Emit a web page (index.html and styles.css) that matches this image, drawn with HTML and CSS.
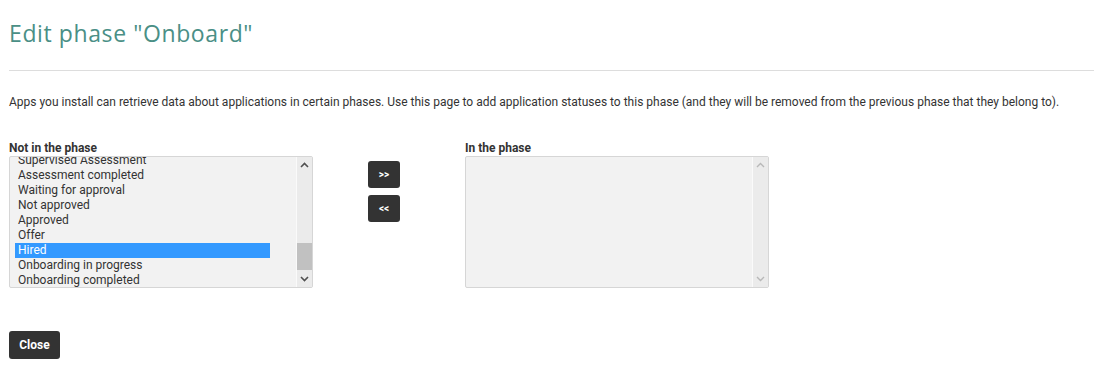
FILE: index.html
```html
<!DOCTYPE html>
<html lang="en">
<head>
    <meta charset="UTF-8">
    <meta name="viewport" content="width=device-width, initial-scale=1.0">
    <title>Edit phase</title>
    <link rel="stylesheet" href="styles.css">
</head>
<body>

<div class="page">
    <h1 class="title">Edit phase "Onboard"</h1>
    <hr class="divider">

    <p class="intro">Apps you install can retrieve data about applications in certain phases. Use this page to add application statuses to this phase (and they will be removed from the previous phase that they belong to).</p>

    <div class="lists">
        <div class="list-col">
            <div class="list-label">Not in the phase</div>
            <div class="listbox">
                <div class="options scrolled">
                    <div class="option">Supervised Assessment</div>
                    <div class="option">Assessment completed</div>
                    <div class="option">Waiting for approval</div>
                    <div class="option">Not approved</div>
                    <div class="option">Approved</div>
                    <div class="option">Offer</div>
                    <div class="option selected">Hired</div>
                    <div class="option">Onboarding in progress</div>
                    <div class="option">Onboarding completed</div>
                </div>
                <div class="scrollbar">
                    <svg class="arrow" width="15" height="17" viewBox="0 0 15 17"><polyline points="4,10 7.5,6.5 11,10" fill="none" stroke="#505050" stroke-width="1.6"/></svg>
                    <div class="track"><div class="thumb"></div></div>
                    <svg class="arrow" width="15" height="17" viewBox="0 0 15 17"><polyline points="4,7 7.5,10.5 11,7" fill="none" stroke="#505050" stroke-width="1.6"/></svg>
                </div>
            </div>
        </div>

        <div class="move-buttons">
            <button class="btn small">&gt;&gt;</button>
            <button class="btn small">&lt;&lt;</button>
        </div>

        <div class="list-col">
            <div class="list-label">In the phase</div>
            <div class="listbox">
                <div class="options"></div>
                <div class="scrollbar disabled">
                    <svg class="arrow" width="15" height="17" viewBox="0 0 15 17"><polyline points="4,10 7.5,6.5 11,10" fill="none" stroke="#b8b8b8" stroke-width="1.4"/></svg>
                    <div class="track"></div>
                    <svg class="arrow" width="15" height="17" viewBox="0 0 15 17"><polyline points="4,7 7.5,10.5 11,7" fill="none" stroke="#b8b8b8" stroke-width="1.4"/></svg>
                </div>
            </div>
        </div>
    </div>

    <button class="btn close">Close</button>
</div>

</body>
</html>
```

FILE: styles.css
```css
body {
    font-family: Roboto, "Liberation Sans", sans-serif;
    font-size: 12px;
    color: #333;
    background-color: white;
    margin: 0;
}
.page {
    padding: 0 0 0 9px;
}
.title {
    font-family: "Open Sans", sans-serif;
    font-weight: 400;
    font-size: 23px;
    letter-spacing: 0.6px;
    color: #4a8f86;
    margin: 0;
    padding-top: 18px;
    line-height: 30px;
}
.divider {
    border: none;
    border-top: 1px solid #ddd;
    margin: 22px 0 0 0;
}
.intro {
    margin: 23px 0 0 0;
    line-height: 16px;
}
.lists {
    display: flex;
    margin-top: 31px;
}
.list-label {
    font-weight: bold;
    line-height: 15px;
    height: 15px;
}
.listbox {
    display: flex;
    width: 302px;
    height: 130px;
    border: 1px solid #d6d6d6;
    border-radius: 2px;
    background-color: #f2f2f2;
    overflow: hidden;
}
.options {
    flex: 1;
    padding: 0 0 0 5px;
}
.options.scrolled {
    margin-top: -4px;
}
.option {
    line-height: 15px;
    height: 15px;
    width: 252px;
    padding-left: 3px;
    white-space: nowrap;
}
.option.selected {
    background-color: #3399ff;
    color: white;
}
.scrollbar {
    width: 15px;
    display: flex;
    flex-direction: column;
    border-left: 1px solid #fafafa;
    background-color: #ebebeb;
}
.arrow {
    display: block;
    flex: none;
}
.track {
    flex: 1;
    display: flex;
    flex-direction: column;
    justify-content: flex-end;
}
.thumb {
    height: 27px;
    background-color: #c1c1c1;
}
.move-buttons {
    display: flex;
    flex-direction: column;
    gap: 7px;
    margin: 20px 65px 0 55px;
}
.btn {
    background-color: #333;
    color: white;
    border: none;
    border-radius: 3px;
    font-family: Roboto, "Liberation Sans", sans-serif;
    font-weight: bold;
    cursor: pointer;
}
.btn.small {
    width: 32px;
    height: 27px;
    font-size: 10px;
    padding: 0;
}
.close {
    margin-top: 43px;
    width: 51px;
    height: 28px;
    font-size: 12px;
    padding: 0;
}
```
